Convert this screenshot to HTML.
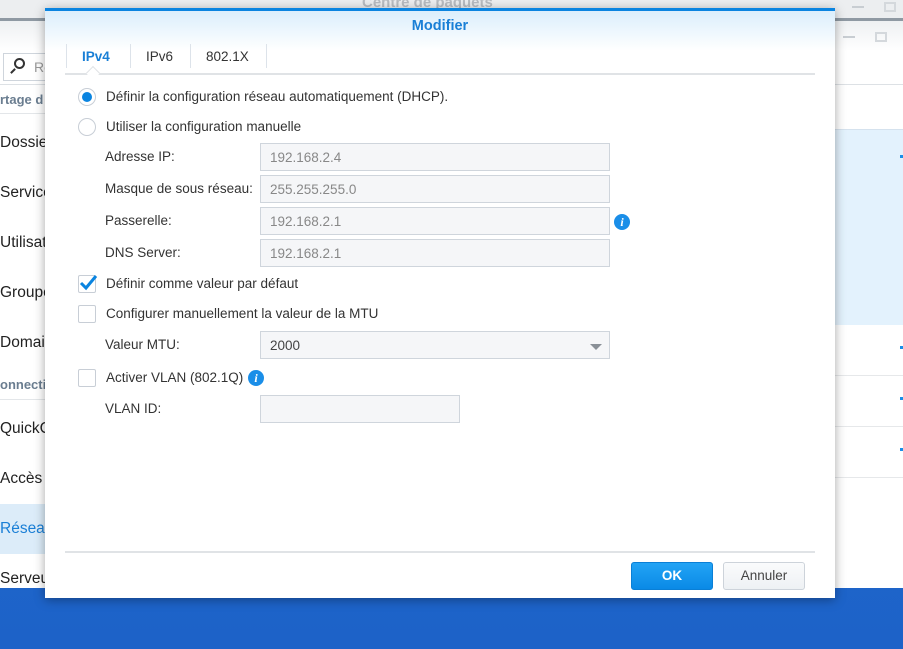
<!DOCTYPE html>
<html><head><meta charset="utf-8"><style>
*{margin:0;padding:0;box-sizing:border-box}
body{width:903px;height:649px;overflow:hidden;position:relative;font-family:"Liberation Sans",Arial,sans-serif;font-size:13.5px;color:#333;background:linear-gradient(#2274d4,#1d62c8)}
.abs{position:absolute}
.bgwin{left:0;top:0;width:903px;height:588px;background:#fff}
.tbar{left:0;top:0;width:903px;height:18px;background:#eceef0}
.side{left:0;color:#222;font-size:15.5px}
.hdr{left:0;color:#6a7d90;font-weight:bold;font-size:13px}
.dlg{left:45px;top:8px;width:790px;height:590px;background:#fff;border-top:3px solid #0a84e0;box-shadow:0 2px 10px rgba(0,0,0,.35)}
.dhead{left:0;top:0;width:790px;height:40px;background:linear-gradient(#dbeefc,#fff)}
.lbl{left:60px;font-size:13.5px;color:#333}
.inp{left:215px;width:350px;height:28px;background:#f5f6f8;border:1px solid #cfd5dc;color:#888;font-size:13.5px;padding:6px 9px}
.cb{left:33px;width:18px;height:18px;border:1px solid #c8ced6;background:#fff;border-radius:2px}
.rd{left:33px;width:18px;height:18px;border:1px solid #c8ced6;border-radius:50%;background:#fff}
.txt{left:61px;font-size:13.5px;color:#333}
.info{width:16px;height:16px;border-radius:50%;background:#1a8ee8;color:#fff;font:italic bold 12px "Liberation Serif",serif;text-align:center;line-height:16px}
</style></head><body>
<div class="abs bgwin"></div>
<div class="abs tbar"></div>
<div class="abs" style="left:362px;top:-6px;color:#b8bcc1;font-weight:bold;font-size:15px">Centre de paquets</div>
<div class="abs" style="left:852px;top:6px;width:12px;height:2px;background:#c8cdd2"></div>
<div class="abs" style="left:884px;top:2px;width:12px;height:10px;border:2px solid #d4d8dc"></div>
<div class="abs" style="left:0;top:18px;width:903px;height:3px;background:#8f99a3"></div>
<div class="abs" style="left:0;top:21px;width:903px;height:30px;background:linear-gradient(#eef0f2,#fff)"></div>
<div class="abs" style="left:843px;top:36px;width:12px;height:2px;background:#c8cdd2"></div>
<div class="abs" style="left:875px;top:32px;width:12px;height:10px;border:2px solid #d4d8dc"></div>
<div class="abs" style="left:3px;top:53px;width:60px;height:28px;border:1px solid #cfd5dc;background:#fff"></div>
<div class="abs" style="left:14px;top:58px;width:11px;height:11px;border:2px solid #333;border-radius:50%"></div>
<div class="abs" style="left:10px;top:70px;width:6px;height:2px;background:#333;transform:rotate(-45deg)"></div>
<div class="abs" style="left:34px;top:59px;color:#999;font-size:14px">Re</div>
<div class="abs" style="left:0;top:84px;width:903px;height:1px;background:#dde1e5"></div>
<div class="abs hdr" style="top:92px">rtage d</div>
<div class="abs" style="left:0;top:113px;width:45px;height:1px;background:#e3e6e9"></div>
<div class="abs side" style="top:134px">Dossier</div>
<div class="abs side" style="top:184px">Services</div>
<div class="abs side" style="top:234px">Utilisate</div>
<div class="abs side" style="top:284px">Groupe</div>
<div class="abs side" style="top:334px">Domain</div>
<div class="abs hdr" style="top:377px">onnecti</div>
<div class="abs" style="left:0;top:399px;width:45px;height:1px;background:#e3e6e9"></div>
<div class="abs side" style="top:420px">QuickCo</div>
<div class="abs side" style="top:470px">Accès e</div>
<div class="abs" style="left:0;top:504px;width:45px;height:50px;background:#dcecf9"></div>
<div class="abs side" style="top:520px;color:#1a7fd6">Réseau</div>
<div class="abs side" style="top:570px">Serveur</div>
<div class="abs" style="left:835px;top:129px;width:68px;height:196px;background:#e3f2fd;border-top:1px solid #d5e2ee"></div>
<div class="abs" style="left:835px;top:375px;width:68px;height:1px;background:#e6e8ea"></div>
<div class="abs" style="left:835px;top:426px;width:68px;height:1px;background:#e6e8ea"></div>
<div class="abs" style="left:835px;top:477px;width:68px;height:1px;background:#e6e8ea"></div>
<div class="abs" style="left:900px;top:155px;width:3px;height:3px;background:#1a8ee8"></div>
<div class="abs" style="left:900px;top:346px;width:3px;height:3px;background:#1a8ee8"></div>
<div class="abs" style="left:900px;top:397px;width:3px;height:3px;background:#1a8ee8"></div>
<div class="abs" style="left:900px;top:448px;width:3px;height:3px;background:#1a8ee8"></div>

<div class="abs dlg">
 <div class="abs dhead"></div>
 <div class="abs" style="left:0;top:7px;width:790px;text-align:center;color:#1a7fd6;font-weight:bold;font-size:14.5px">Modifier</div>
 <div class="abs" style="left:21px;top:33px;width:1px;height:24px;background:#dde3ea"></div>
 <div class="abs" style="left:85px;top:33px;width:1px;height:24px;background:#dde3ea"></div>
 <div class="abs" style="left:145px;top:33px;width:1px;height:24px;background:#dde3ea"></div>
 <div class="abs" style="left:221px;top:33px;width:1px;height:24px;background:#dde3ea"></div>
 <div class="abs" style="left:37px;top:38px;color:#1a7fd6;font-weight:bold">IPv4</div>
 <div class="abs" style="left:101px;top:38px">IPv6</div>
 <div class="abs" style="left:161px;top:38px">802.1X</div>
 <div class="abs" style="left:20px;top:62px;width:750px;height:2px;background:#e0e3e6"></div>
 <div class="abs" style="left:43px;top:57px;width:10px;height:10px;background:#fff;border-left:1px solid #e0e3e6;border-top:1px solid #e0e3e6;transform:rotate(45deg)"></div>

 <div class="abs rd" style="top:77px;border-color:#c8ced6"><div style="margin:3px;width:10px;height:10px;border-radius:50%;background:#0a84e0"></div></div>
 <div class="abs txt" style="top:78px">Définir la configuration réseau automatiquement (DHCP).</div>
 <div class="abs rd" style="top:107px"></div>
 <div class="abs txt" style="top:108px">Utiliser la configuration manuelle</div>

 <div class="abs lbl" style="top:138px">Adresse IP:</div>
 <div class="abs inp" style="top:132px">192.168.2.4</div>
 <div class="abs lbl" style="top:170px">Masque de sous réseau:</div>
 <div class="abs inp" style="top:164px">255.255.255.0</div>
 <div class="abs lbl" style="top:202px">Passerelle:</div>
 <div class="abs inp" style="top:196px">192.168.2.1</div>
 <div class="abs info" style="left:569px;top:203px">i</div>
 <div class="abs lbl" style="top:234px">DNS Server:</div>
 <div class="abs inp" style="top:228px">192.168.2.1</div>

 <div class="abs cb" style="top:264px"></div>
 <svg class="abs" style="left:33px;top:263px" width="20" height="18"><path d="M3 9 L8 14 L18 2" stroke="#0a84e0" stroke-width="3" fill="none"/></svg>
 <div class="abs txt" style="top:265px">Définir comme valeur par défaut</div>
 <div class="abs cb" style="top:294px"></div>
 <div class="abs txt" style="top:295px">Configurer manuellement la valeur de la MTU</div>
 <div class="abs lbl" style="top:326px">Valeur MTU:</div>
 <div class="abs inp" style="top:320px;color:#444">2000</div>
 <div class="abs" style="left:545px;top:333px;width:0;height:0;border-left:6px solid transparent;border-right:6px solid transparent;border-top:6px solid #8a9097"></div>
 <div class="abs cb" style="top:358px"></div>
 <div class="abs txt" style="top:359px">Activer VLAN (802.1Q)</div>
 <div class="abs info" style="left:203px;top:359px">i</div>
 <div class="abs lbl" style="top:390px">VLAN ID:</div>
 <div class="abs inp" style="top:384px;width:200px"></div>

 <div class="abs" style="left:20px;top:540px;width:750px;height:2px;background:#e0e3e6"></div>
 <div class="abs" style="left:586px;top:551px;width:82px;height:28px;border-radius:3px;background:linear-gradient(#22a4f5,#0a8ae6);border:1px solid #0a7fd6;color:#fff;font-weight:bold;text-align:center;line-height:26px">OK</div>
 <div class="abs" style="left:678px;top:551px;width:82px;height:28px;border-radius:3px;background:linear-gradient(#fafbfc,#eef1f4);border:1px solid #cdd3da;color:#444;text-align:center;line-height:26px">Annuler</div>
</div>
</body></html>
